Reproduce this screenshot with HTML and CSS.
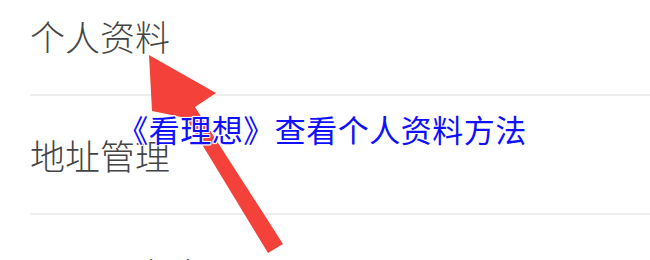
FILE: index.html
```html
<!DOCTYPE html>
<html lang="zh-CN">
<head>
<meta charset="utf-8">
<link rel="stylesheet" href="styles.css">
</head>
<body>
<div class="page">
  <ul class="menu">
    <li class="item">个人资料</li>
    <li class="item">地址管理</li>
    <li class="item">账号与安全</li>
  </ul>
  <svg class="arrow" width="650" height="260" viewBox="0 0 650 260">
    <polygon points="149,55 216,93 195,107 283,244 268,253 186,118 152,111" fill="#f4413a"/>
  </svg>
  <div class="caption">《看理想》查看个人资料方法</div>
</div>
</body>
</html>
```
FILE: styles.css
```css
html, body {
  margin: 0;
  padding: 0;
  background: #fff;
}
.page {
  position: relative;
  width: 650px;
  height: 260px;
  overflow: hidden;
  font-family: "Noto Sans CJK SC", "Noto Sans", sans-serif;
}
.menu {
  list-style: none;
  margin: -23px 0 0 0;
  padding: 0 0 0 30px;
}
.item {
  height: 117px;
  line-height: 117px;
  font-size: 35px;
  font-weight: 300;
  color: #444;
  border-bottom: 2px solid #eeeeee;
}
.arrow {
  position: absolute;
  left: 0;
  top: 0;
}
.caption {
  position: absolute;
  left: 0;
  right: 0;
  top: 109px;
  padding-right: 6px;
  text-align: center;
  font-size: 31px;
  line-height: 40px;
  letter-spacing: 0.5px;
  color: #1010ff;
  text-shadow: 0 0 2px #fff, 0 0 2px #fff, 1px 1px 0 #fff, -1px -1px 0 #fff, 1px -1px 0 #fff, -1px 1px 0 #fff;
}
```
